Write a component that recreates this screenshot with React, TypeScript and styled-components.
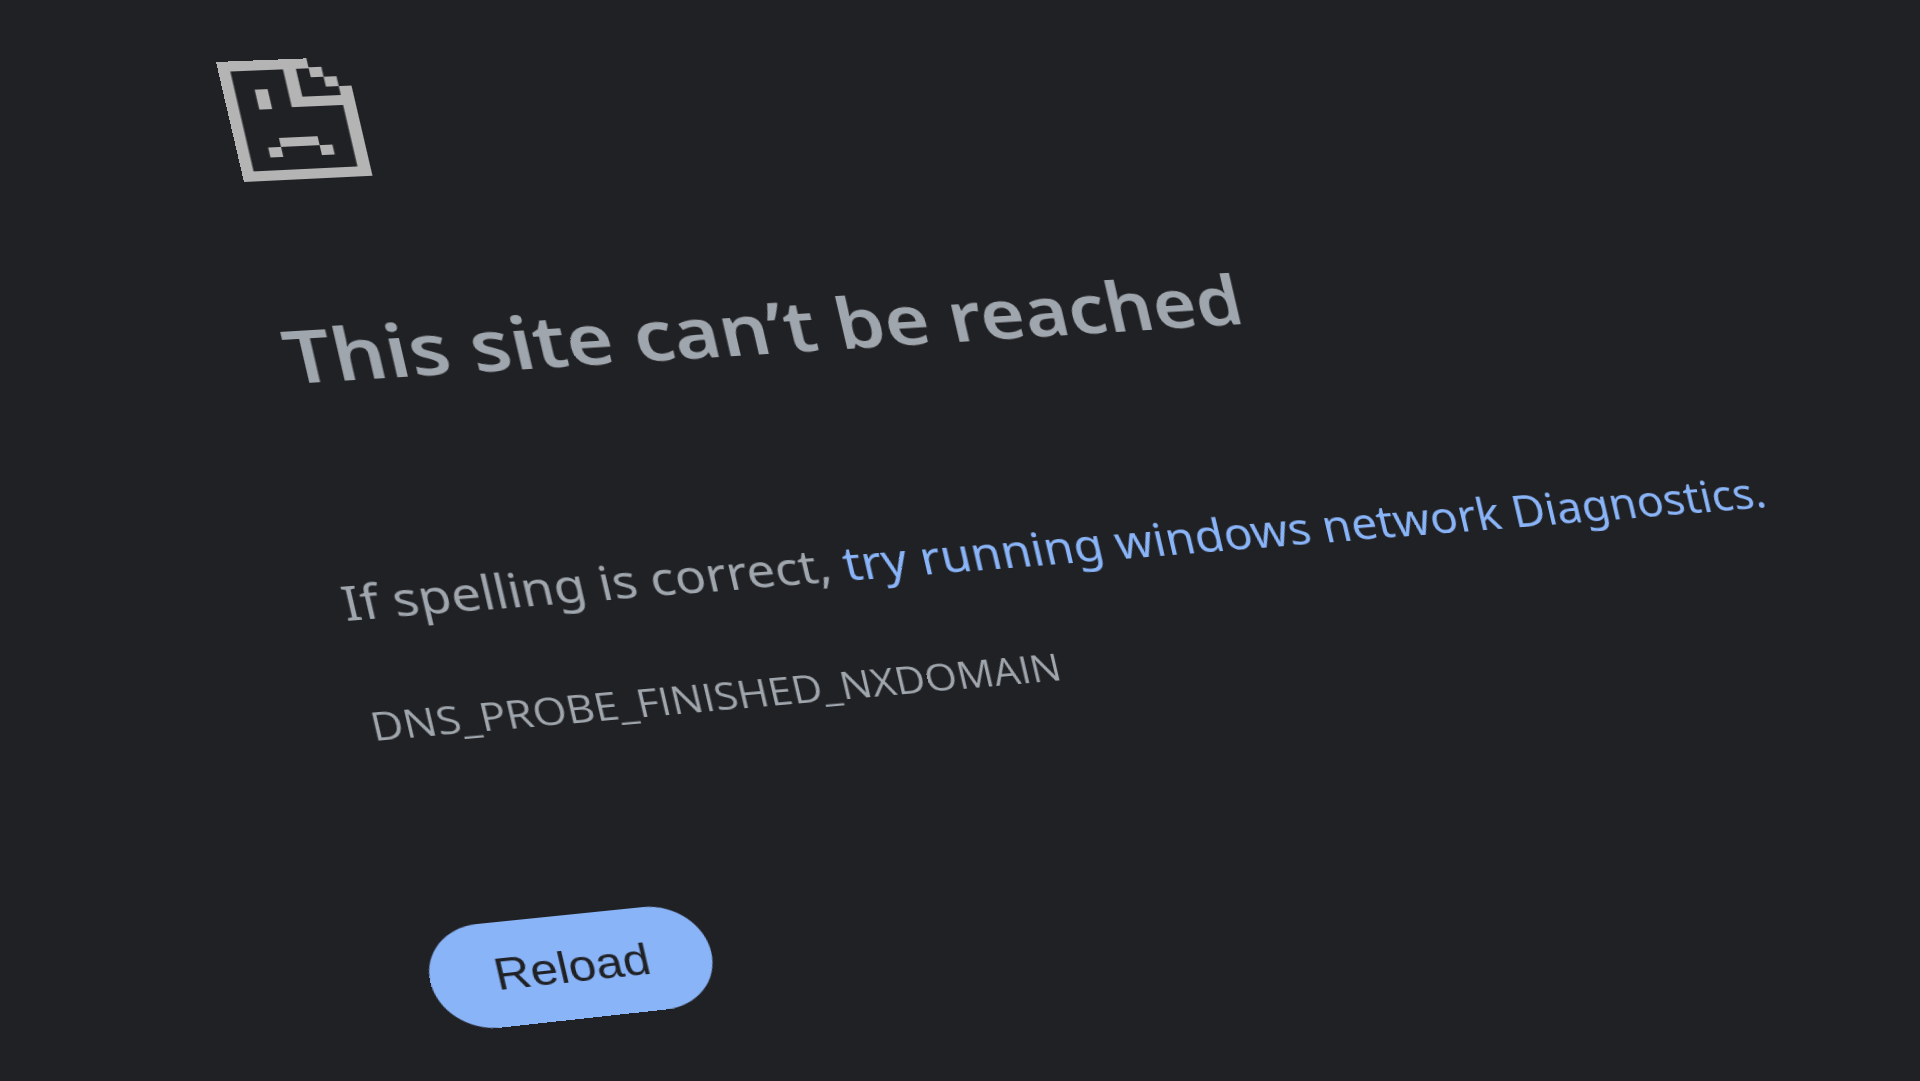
import React from "react";
import styled, { createGlobalStyle } from "styled-components";

const GlobalStyle = createGlobalStyle`
  body {
    margin: 0;
    background: #202124;
  }
`;

const Page = styled.main`
  box-sizing: border-box;
  min-height: 100vh;
  padding: 62px 0 0 216px;
  overflow: hidden;
  background: #202124;
  color: #a0a6ad;
  font-family: "Noto Sans", "Open Sans", sans-serif;
`;

/* The whole error page lies on one plane, seen at an angle. */
const TiltedPlane = styled.div`
  display: flex;
  flex-direction: column;
  align-items: flex-start;
  transform-origin: 0 0;
  transform: matrix3d(
    1.15, -0.0463, 0, 0.00008,
    0.233, 1, 0, 0,
    0, 0, 1, 0,
    0, 0, 0, 1
  );
`;

const SadPage = styled.svg`
  display: block;
  width: 113px;
  height: 120px;
  fill: #b4b4b4;
`;

const Title = styled.h1`
  margin: 134px 0 0;
  font-size: 73px;
  font-weight: 600;
  line-height: 80px;
  white-space: nowrap;
`;

const Suggestion = styled.p`
  margin: 177px 0 0;
  font-size: 47px;
  line-height: 60px;
  white-space: nowrap;
`;

const DiagnosticsLink = styled.a`
  color: #8ab4f8;
  text-decoration: none;
`;

const ErrorCode = styled.p`
  margin: 63px 0 0;
  font-family: "Open Sans", "Noto Sans", sans-serif;
  font-size: 39px;
  line-height: 60px;
`;

const ReloadButton = styled.button`
  height: 104px;
  margin: 174px 0 0;
  padding: 0 57px;
  border: 0;
  border-radius: 52px;
  background: #8ab4f8;
  color: #202124;
  font-family: "Liberation Sans", Arial, sans-serif;
  font-size: 44px;
  line-height: 60px;
`;

export default function App() {
  return (
    <>
      <GlobalStyle />
      <Page>
        <TiltedPlane>
          <SadPage viewBox="0 0 130 120" preserveAspectRatio="none" aria-hidden="true">
            <path
              fillRule="evenodd"
              d="M0 0H91V9H104V19H117V29H130V120H0ZM12 10V110H117V48H65V10ZM78 10V38H117V29H104V19H91V10Z"
            />
            <path d="M32 29H45V49H32ZM45 78H84V87H97V97H84V87H45V97H32V87H45Z" />
          </SadPage>
          <Title>This site can’t be reached</Title>
          <Suggestion>
            If spelling is correct,{" "}
            <DiagnosticsLink href="#diagnostics">try running windows network Diagnostics.</DiagnosticsLink>
          </Suggestion>
          <ErrorCode>DNS_PROBE_FINISHED_NXDOMAIN</ErrorCode>
          <ReloadButton type="button" onClick={() => window.location.reload()}>
            Reload
          </ReloadButton>
        </TiltedPlane>
      </Page>
    </>
  );
}
